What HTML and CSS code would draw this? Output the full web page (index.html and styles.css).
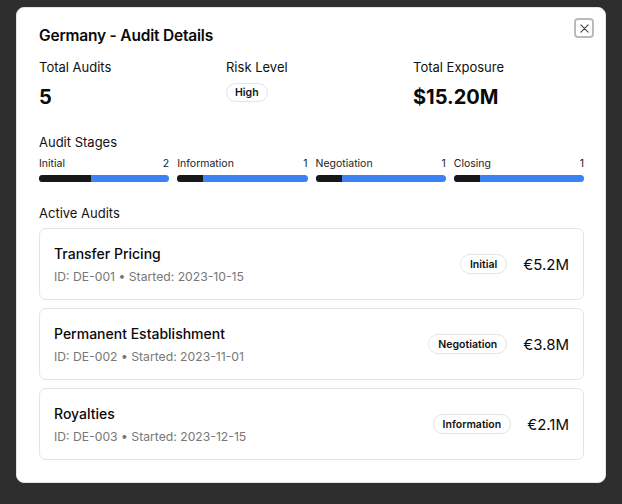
FILE: index.html
```html
<!DOCTYPE html>
<html lang="en">
<head>
<meta charset="utf-8">
<title>Germany - Audit Details</title>
<link rel="stylesheet" href="styles.css">
</head>
<body>
<div class="modal">
  <button class="close" aria-label="Close">
    <svg width="10" height="10" viewBox="0 0 10 10"><path d="M1 1 L9 9 M9 1 L1 9" stroke="#444" stroke-width="1.2" stroke-linecap="round"/></svg>
  </button>
  <h2 class="title">Germany - Audit Details</h2>
  <div class="stats">
    <div class="stat">
      <div class="label">Total Audits</div>
      <div class="value">5</div>
    </div>
    <div class="stat">
      <div class="label">Risk Level</div>
      <div class="risk"><span class="badge badge-sm">High</span></div>
    </div>
    <div class="stat">
      <div class="label">Total Exposure</div>
      <div class="value">$15.20M</div>
    </div>
  </div>

  <div class="section-label stages-label">Audit Stages</div>
  <div class="stages">
    <div class="stage">
      <div class="stage-head"><span>Initial</span><span>2</span></div>
      <div class="bar"><div class="fill" style="width:40%"></div></div>
    </div>
    <div class="stage">
      <div class="stage-head"><span>Information</span><span>1</span></div>
      <div class="bar"><div class="fill" style="width:20%"></div></div>
    </div>
    <div class="stage">
      <div class="stage-head"><span>Negotiation</span><span>1</span></div>
      <div class="bar"><div class="fill" style="width:20%"></div></div>
    </div>
    <div class="stage">
      <div class="stage-head"><span>Closing</span><span>1</span></div>
      <div class="bar"><div class="fill" style="width:20%"></div></div>
    </div>
  </div>

  <div class="section-label active-label">Active Audits</div>
  <div class="audits">
    <div class="audit">
      <div class="audit-info">
        <div class="audit-title">Transfer Pricing</div>
        <div class="audit-sub">ID: DE-001 • Started: 2023-10-15</div>
      </div>
      <div class="audit-right">
        <span class="badge">Initial</span>
        <span class="amount">€5.2M</span>
      </div>
    </div>
    <div class="audit">
      <div class="audit-info">
        <div class="audit-title">Permanent Establishment</div>
        <div class="audit-sub">ID: DE-002 • Started: 2023-11-01</div>
      </div>
      <div class="audit-right">
        <span class="badge">Negotiation</span>
        <span class="amount">€3.8M</span>
      </div>
    </div>
    <div class="audit">
      <div class="audit-info">
        <div class="audit-title">Royalties</div>
        <div class="audit-sub">ID: DE-003 • Started: 2023-12-15</div>
      </div>
      <div class="audit-right">
        <span class="badge">Information</span>
        <span class="amount">€2.1M</span>
      </div>
    </div>
  </div>
</div>
</body>
</html>
```

FILE: styles.css
```css
* { box-sizing: border-box; }
html, body { margin: 0; padding: 0; }
body {
  background: #2e2e2e;
  font-family: Inter, "Noto Sans", "Liberation Sans", sans-serif;
  color: #0a0a0a;
  height: 504px;
  overflow: hidden;
}
.modal {
  position: relative;
  margin: 7px 16px 0 16px;
  width: 590px;
  background: #fff;
  border: 1px solid #e4e4e7;
  border-radius: 8px;
  padding: 16px 21px 22px 22px;
}
.close {
  position: absolute;
  top: 10px;
  right: 11px;
  width: 20px;
  height: 20px;
  padding: 0;
  background: #fff;
  border: 2px solid #b9b9c0;
  border-radius: 4px;
  display: flex;
  align-items: center;
  justify-content: center;
}
.close svg { display: block; width: 9px; height: 9px; }
.title {
  margin: 0;
  font-size: 15.5px;
  line-height: 23px;
  font-weight: 600;
  letter-spacing: -0.2px;
}
.stats {
  margin-top: 10px;
  display: grid;
  grid-template-columns: repeat(3, 1fr);
  gap: 16px;
}
.label, .section-label {
  font-size: 13px;
  line-height: 20px;
  font-weight: 400;
  color: #111;
}
.value {
  margin-top: 6px;
  font-size: 20px;
  line-height: 28px;
  font-weight: 700;
}
.risk { margin-top: 6px; display: flex; }
.badge {
  display: inline-flex;
  align-items: center;
  height: 20px;
  padding: 0 9px;
  border: 1px solid #e4e4e7;
  border-radius: 999px;
  font-size: 10.5px;
  font-weight: 600;
  color: #111;
  background: #fff;
}
.badge-sm { height: 19px; padding: 0 8px; }
.stages-label { margin-top: 21px; }
.stages {
  margin-top: 4px;
  display: grid;
  grid-template-columns: repeat(4, 1fr);
  gap: 8px;
}
.stage-head {
  display: flex;
  justify-content: space-between;
  font-size: 10.5px;
  line-height: 16px;
  color: #222;
}
.bar {
  margin-top: 3px;
  height: 7px;
  border-radius: 999px;
  background: #3b82f6;
  overflow: hidden;
}
.fill {
  height: 100%;
  background: #18181b;
}
.active-label { margin-top: 21px; }
.audits {
  margin-top: 5px;
  display: flex;
  flex-direction: column;
  gap: 8px;
}
.audit {
  display: flex;
  align-items: center;
  justify-content: space-between;
  height: 72px;
  padding: 0 14px;
  border: 1px solid #e4e4e7;
  border-radius: 7px;
}
.audit-info { padding-top: 1px; }
.audit-title {
  font-size: 14px;
  line-height: 20px;
  font-weight: 500;
}
.audit-sub {
  margin-top: 4px;
  font-size: 12.2px;
  line-height: 18px;
  color: #777;
}
.audit-right {
  display: flex;
  align-items: center;
  gap: 16px;
}
.amount {
  font-size: 15px;
  font-weight: 400;
}
```
